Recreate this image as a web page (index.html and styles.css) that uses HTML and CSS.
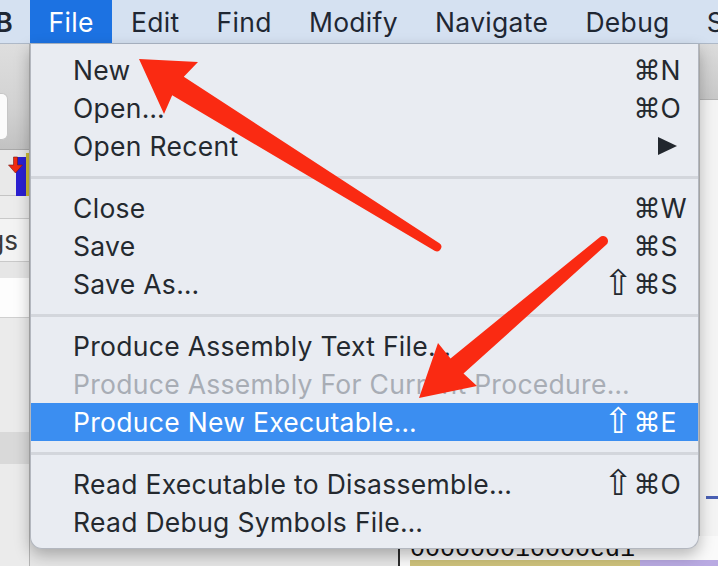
FILE: index.html
```html
<!DOCTYPE html>
<html>
<head>
<meta charset="utf-8">
<link rel="stylesheet" href="styles.css">
</head>
<body>
<div class="screen">
  <div class="menubar">
    <span class="mb-item mb-app">B</span>
    <span class="mb-item mb-active">File</span>
    <span class="mb-item">Edit</span>
    <span class="mb-item">Find</span>
    <span class="mb-item">Modify</span>
    <span class="mb-item">Navigate</span>
    <span class="mb-item">Debug</span>
    <span class="mb-item">S</span>
  </div>

  <div class="backdrop">
    <div class="left-strip">
      <div class="ls-toolbar"><div class="ls-field"></div></div>
      <div class="ls-tools">
        <svg class="ls-icon" width="30" height="46" viewBox="0 0 30 46">
          <rect x="16" y="7" width="10" height="39" fill="#2b1fd2"/>
          <rect x="26" y="3" width="3" height="43" fill="#cdbb36"/>
          <path d="M13.5 7 h4 v8 h5 l-7 8 l-7 -8 h5 z" fill="#f22b12" stroke="#7a1a10" stroke-width="0.6"/>
        </svg>
      </div>
      <div class="ls-gap"></div>
      <div class="ls-tab">gs</div>
      <div class="ls-gap2"></div>
      <div class="ls-white"></div>
      <div class="ls-grey"></div>
      <div class="ls-dark"></div>
      <div class="ls-rest"></div>
    </div>
    <div class="center-fill"></div>
    <div class="right-strip">
      <div class="rs-toolbar"></div>
      <div class="rs-body"><div class="rs-dash"></div></div>
    </div>
    <div class="bottom-row">
      <div class="br-gutter"></div>
      <div class="br-code">
        <div class="code-line">000000010000ed1</div>
        <div class="code-bands"><span class="band-yellow"></span><span class="band-purple"></span></div>
      </div>
    </div>
  </div>

  <div class="menu">
    <div class="item"><span class="label">New</span><span class="sc"><span class="mods"><span class="cmd">⌘</span></span><span class="key">N</span></span></div>
    <div class="item"><span class="label">Open…</span><span class="sc"><span class="mods"><span class="cmd">⌘</span></span><span class="key">O</span></span></div>
    <div class="item"><span class="label">Open Recent</span><span class="sc"><span class="mods"></span><span class="key"><svg class="tri" width="19" height="18" viewBox="0 0 19 18"><path d="M0 0 L19 9 L0 18 Z" fill="#22272e"/></svg></span></span></div>
    <div class="sep"></div>
    <div class="item"><span class="label">Close</span><span class="sc"><span class="mods"><span class="cmd">⌘</span></span><span class="key">W</span></span></div>
    <div class="item"><span class="label">Save</span><span class="sc"><span class="mods"><span class="cmd">⌘</span></span><span class="key">S</span></span></div>
    <div class="item"><span class="label">Save As…</span><span class="sc"><span class="mods"><span class="shift">⇧</span><span class="cmd">⌘</span></span><span class="key">S</span></span></div>
    <div class="sep"></div>
    <div class="item"><span class="label">Produce Assembly Text File…</span></div>
    <div class="item disabled"><span class="label">Produce Assembly For Current Procedure…</span></div>
    <div class="item selected"><span class="label">Produce New Executable…</span><span class="sc"><span class="mods"><span class="shift">⇧</span><span class="cmd">⌘</span></span><span class="key">E</span></span></div>
    <div class="sep"></div>
    <div class="item"><span class="label">Read Executable to Disassemble…</span><span class="sc"><span class="mods"><span class="shift">⇧</span><span class="cmd">⌘</span></span><span class="key">O</span></span></div>
    <div class="item"><span class="label">Read Debug Symbols File…</span></div>
  </div>

  <svg class="arrows" width="718" height="566" viewBox="0 0 718 566">
    <path d="M139 59 L198 62 L183.8 76.7 L439.4 243.2 A4.5 4.5 0 0 1 434.6 250.8 L172.2 95.3 L164 114 Z" fill="#fa2a12"/>
    <path d="M419 398 L438 343 L450.5 358.4 L599.75 237.2 A5 5 0 0 1 606.25 244.8 L463.5 373.6 L477 386 Z" fill="#fa2a12"/>
  </svg>
</div>
</body>
</html>
```

FILE: styles.css
```css
* { box-sizing: border-box; margin: 0; padding: 0; }

html, body {
  width: 718px;
  height: 566px;
  overflow: hidden;
}

body {
  font-family: Inter, "Noto Sans", "DejaVu Sans", sans-serif;
  background: #ececec;
}

.screen {
  position: relative;
  width: 718px;
  height: 566px;
  display: flex;
  flex-direction: column;
}

/* ---------- menu bar ---------- */
.menubar {
  height: 44px;
  flex: none;
  display: flex;
  align-items: stretch;
  background: #d5e1f1;
  border-bottom: 1px solid #aeb9c8;
  font-size: 26.5px;
  letter-spacing: 0.3px;
  color: #1f2733;
  white-space: nowrap;
  overflow: hidden;
}

.mb-item {
  display: flex;
  align-items: center;
  padding: 0 18.6px;
  flex: none;
}

.mb-app {
  width: 30px;
  padding: 0 17px 0 0;
  justify-content: flex-end;
  font-weight: 600;
}

.mb-active {
  background: #1c72e2;
  color: #fff;
  margin-bottom: -1px;
}

/* ---------- backdrop (app window behind the menu) ---------- */
.backdrop {
  flex: 1;
  display: grid;
  grid-template-columns: 30px 1fr 19px;
  grid-template-rows: 1fr 30px;
}

.left-strip {
  grid-row: 1 / 3;
  grid-column: 1;
  display: flex;
  flex-direction: column;
  border-right: 1px solid #b4b4b4;
  overflow: hidden;
}

.ls-toolbar {
  height: 106px;
  flex: none;
  background: linear-gradient(#dedede, #d2d2d2 60%, #c2c2c2);
  border-bottom: 1px solid #a9a9a9;
  padding-top: 49px;
}

.ls-field {
  width: 10px;
  height: 47px;
  margin-left: -2px;
  background: #fbfbfb;
  border: 1px solid #c6c6c6;
  border-left: none;
  border-radius: 0 6px 6px 0;
}

.ls-tools {
  height: 46px;
  flex: none;
  background: #e9e9e9;
  border-bottom: 1px solid #c4c4c4;
}

.ls-icon { display: block; }

.ls-gap { height: 22px; flex: none; background: #ececec; }

.ls-tab {
  height: 44px;
  flex: none;
  background: #f3f3f3;
  border-top: 1px solid #c9c9c9;
  border-bottom: 1px solid #c9c9c9;
  font-size: 26px;
  color: #3a3a3a;
  display: flex;
  align-items: center;
  justify-content: flex-end;
  padding-right: 11px;
}

.ls-gap2 { height: 16px; flex: none; background: #e6e6e6; }
.ls-white { height: 40px; flex: none; background: #fdfdfd; border-bottom: 1px solid #cfcfcf; }
.ls-grey { height: 114px; flex: none; background: #ebebeb; }
.ls-dark { height: 32px; flex: none; background: #d9d9d9; }
.ls-rest { flex: 1; background: #ebebeb; }

.center-fill { grid-row: 1; grid-column: 2; background: #ededed; }

.right-strip {
  grid-row: 1;
  grid-column: 3;
  display: flex;
  flex-direction: column;
  border-left: 1px solid #bdbdbd;
}

.rs-toolbar {
  height: 56px;
  flex: none;
  background: linear-gradient(#dcdcdc, #c8c8c8);
  border-bottom: 1px solid #b3b3b3;
}

.rs-body {
  flex: 1;
  background: #f4f4f4;
  padding-top: 396px;
}

.rs-dash {
  height: 3px;
  margin-left: 6px;
  background: #4a60b4;
}

.bottom-row {
  grid-row: 2;
  grid-column: 2 / 4;
  display: flex;
}

.br-gutter {
  width: 370px;
  flex: none;
  background: #e6e6e6;
  border-right: 2px solid #2c2c2c;
}

.br-code {
  flex: 1;
  background: #fafafa;
  display: flex;
  flex-direction: column;
  padding-top: 4px;
}

.code-line {
  font-family: "Liberation Mono", "DejaVu Sans Mono", monospace;
  font-size: 25px;
  line-height: 20px;
  height: 20px;
  padding-left: 10px;
  color: #111;
  white-space: nowrap;
}

.code-bands {
  flex: 1;
  display: flex;
}

.band-yellow { width: 230px; margin-left: 10px; background: #cfc37c; }
.band-purple { flex: 1; background: #b9aae2; }

/* ---------- drop-down menu ---------- */
.menu {
  position: absolute;
  left: 30px;
  top: 44px;
  width: 669px;
  height: 505px;
  padding: 7px 0;
  background: #e9ecf2;
  border: 1px solid #b3b7bf;
  border-top: none;
  border-radius: 0 0 12px 12px;
  box-shadow: 0 6px 16px rgba(0, 0, 0, 0.28);
  font-size: 26.5px;
  letter-spacing: 0.3px;
  color: #24292f;
  white-space: nowrap;
}

.item {
  height: 38px;
  display: flex;
  align-items: center;
  padding-left: 42px;
}

.label { flex: 1; }

.sc {
  width: 100px;
  flex: none;
  display: flex;
  align-items: center;
}

.mods {
  width: 62.5px;
  height: 38px;
  display: flex;
  justify-content: flex-end;
  align-items: center;
  font-family: "DejaVu Sans", sans-serif;
  font-size: 27px;
  letter-spacing: 0;
}

.shift {
  font-size: 35px;
  line-height: 38px;
  margin-right: 1px;
  margin-top: -2px;
}

.key {
  width: 37.5px;
  display: flex;
  align-items: center;
}

.tri { margin-left: -3px; }

.disabled { color: #a8adb5; }

.selected {
  background: #3b8ef1;
  color: #fff;
}

.sep {
  height: 24px;
  display: flex;
  align-items: center;
}

.sep::before {
  content: "";
  flex: 1;
  height: 3px;
  background: #d3d6dc;
}

/* ---------- annotation arrows ---------- */
.arrows {
  position: absolute;
  left: 0;
  top: 0;
  pointer-events: none;
}
```
